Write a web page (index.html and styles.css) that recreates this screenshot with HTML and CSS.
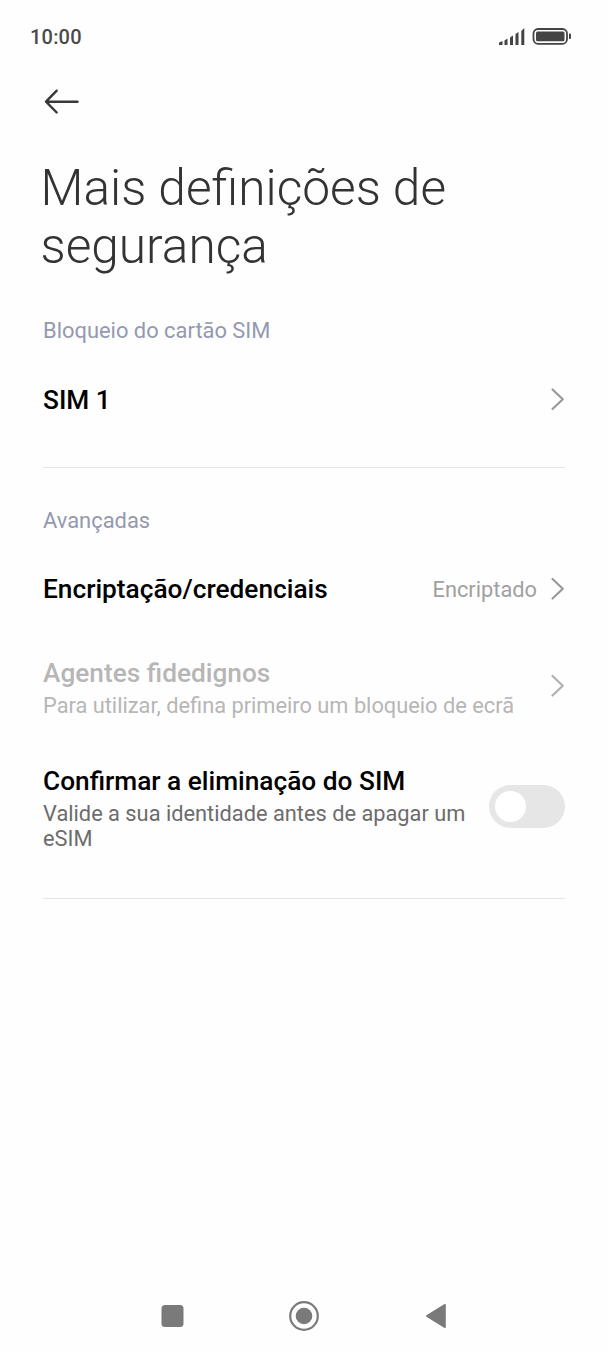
FILE: index.html
```html
<!DOCTYPE html>
<html lang="pt">
<head>
<meta charset="utf-8">
<title>Mais definições de segurança</title>
<link rel="stylesheet" href="styles.css">
</head>
<body>
<div class="screen">
  <header class="status">
    <span class="clock">10:00</span>
    <svg class="status-icons" width="76" height="20" viewBox="0 0 76 20">
      <path fill="#444" d="M1 18v-2.500l3.500-1.500v4zM6.500 18v-4.500l3-2v6.500zM12 18V10.500l3-2V18zM17.500 18V7l3-2v13zM23.300 18V4l3-3v17z"/>
      <rect x="35.500" y="2" width="33.500" height="14.800" rx="4.500" fill="none" stroke="#444" stroke-width="1.800"/>
      <rect x="38" y="4.500" width="28.500" height="9.800" rx="1.500" fill="#444"/>
      <path d="M71 6.500h.7q1.300 0 1.300 1.300v2.900q0 1.300-1.300 1.300h-.7z" fill="#444"/>
    </svg>
  </header>
  <nav class="toolbar">
    <svg width="36" height="26" viewBox="0 0 36 26" fill="none" stroke="#383838" stroke-width="2.400" stroke-linecap="round" stroke-linejoin="round"><path d="M34.500 12.700H3M13.700 1.700L3 12.700l10.700 10.800"/></svg>
  </nav>
  <h1 class="title">Mais definições de segurança</h1>
  <main>
    <section class="group">
      <h2 class="label">Bloqueio do cartão SIM</h2>
      <div class="row sim">
        <div class="name">SIM 1</div>
        <svg class="chevron" width="15" height="24" viewBox="0 0 15 24"><path d="M2.500 2.500l10.300 9.800L2.500 22"/></svg>
      </div>
    </section>
    <section class="group advanced">
      <h2 class="label">Avançadas</h2>
      <div class="row encryption">
        <div class="name">Encriptação/credenciais</div>
        <span class="value">Encriptado</span>
        <svg class="chevron" width="15" height="24" viewBox="0 0 15 24"><path d="M2.500 2l10.300 9.700L2.500 21.500"/></svg>
      </div>
      <div class="row agents">
        <div class="copy"><div class="name">Agentes fidedignos</div><p class="summary">Para utilizar, defina primeiro um bloqueio de ecrã</p></div>
        <svg class="chevron" width="15" height="24" viewBox="0 0 15 24"><path d="M2.500 2l10.300 9.700L2.500 21.500"/></svg>
      </div>
      <div class="row esim">
        <div class="copy"><div class="name">Confirmar a eliminação do SIM</div><p class="summary">Valide a sua identidade antes de apagar um eSIM</p></div>
        <span class="switch"><span class="knob"></span></span>
      </div>
    </section>
  </main>
  <footer class="navbar">
    <svg width="32" height="32" viewBox="0 0 32 32"><rect x="5.500" y="5" width="22" height="22" rx="3.500" fill="#7a7a7a"/></svg>
    <svg width="32" height="32" viewBox="0 0 32 32"><circle cx="16" cy="16" r="13.800" fill="none" stroke="#7a7a7a" stroke-width="2.200"/><circle cx="16" cy="16" r="8.300" fill="#7a7a7a"/></svg>
    <svg width="32" height="32" viewBox="0 0 32 32"><path d="M6.800 16L25 4.700v22.600z" fill="#7a7a7a" stroke="#7a7a7a" stroke-width="1.600" stroke-linejoin="round"/></svg>
  </footer>
</div>
</body>
</html>
```

FILE: styles.css
```css
* { box-sizing: border-box; margin: 0; padding: 0; }
body { background: #fff; font-family: Roboto, sans-serif; color: #000; }
.screen { width: 608px; height: 1352px; display: flex; flex-direction: column; background: #fefefe; }
.status { height: 72px; padding: 2px 34px 0 30px; display: flex; align-items: center; justify-content: space-between; color: #4a4a4a; }
.clock { font-size: 20px; font-weight: 500; letter-spacing: .2px; }
.toolbar { height: 58px; padding: 17px 43px 0; }
.toolbar svg { display: block; }
.title { padding: 29px 41px 0 40.5px; font-size: 49.6px; line-height: 58px; font-weight: 300; color: #333; }
main { padding: 0 43px; }
.group { padding-top: 42px; height: 193px; border-bottom: 1px solid #e7e7e7; }
.advanced { height: 431px; padding-top: 39px; }
.label { padding-top: 1px; font-size: 21.9px; line-height: 25px; font-weight: 400; color: #9499b0; }
.row { display: flex; align-items: center; justify-content: space-between; }
.sim { height: 112px; }
.encryption { height: 112px; }
.sim .name { padding-top: 1px; }
.agents { height: 82px; }
.esim { height: 158px; }
.copy { padding-top: 2px; }
.name { font-size: 26.250px; line-height: 34px; font-weight: 500; white-space: nowrap; }
.summary { padding-top: 3px; font-size: 21.800px; line-height: 25px; color: #6c6c6c; }
.agents .name, .agents .summary { color: #b6b6b6; }
.value { margin-left: auto; margin-right: 13px; font-size: 21.8px; color: #a0a0a0; }
.chevron { flex: none; fill: none; stroke: #999; stroke-width: 2.200; stroke-linecap: round; stroke-linejoin: round; }
.agents .chevron { stroke: #b0b0b0; }
.esim .copy { width: 430px; }
.switch { flex: none; width: 76px; height: 43px; border-radius: 22px; background: #e6e6e6; padding: 6px; }
.knob { display: block; width: 31px; height: 31px; border-radius: 50%; background: #fff; }
.navbar { margin-top: auto; height: 72px; padding: 0 156px; display: flex; align-items: center; justify-content: space-between; }
```
